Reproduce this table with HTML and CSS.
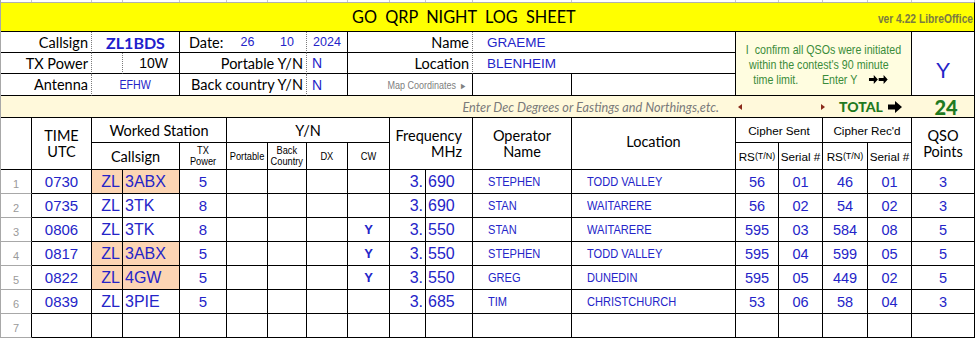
FILE: index.html
```html
<!DOCTYPE html>
<html>
<head>
<meta charset="utf-8">
<title>GO QRP Night Log Sheet</title>
<link rel="stylesheet" href="styles.css">
</head>
<body>
<div class="sheet">
  <div class="stub"></div><div class="stub"></div><div class="stub"></div><div class="stub"></div><div class="stub"></div><div class="stub"></div>
  <div class="stub"></div><div class="stub"></div><div class="stub"></div><div class="stub"></div><div class="stub"></div><div class="stub"></div>
  <div class="stub"></div><div class="stub"></div><div class="stub"></div><div class="stub"></div><div class="stub"></div><div class="stub"></div>

  <div class="c s18 title br bb"><span class="title-text">GO  QRP  NIGHT  LOG  SHEET</span><span class="ver"><span class="n nr">ver 4.22 LibreOffice</span></span></div>

  <div class="c s2 lab bd bb">Callsign</div>
  <div class="c s2 br bb mid call">ZL1BDS</div>
  <div class="c bb date">Date:</div>
  <div class="c bb mid dnum">26</div>
  <div class="c bb bd mid dnum">10</div>
  <div class="c bb br mid dnum">2024</div>
  <div class="c s3 lab bd bb">Name</div>
  <div class="c s2 br bb val">GRAEME</div>
  <div class="c s4 r3 br bb box">
    <div class="box-text">
      <div class="l1">I&nbsp; confirm all QSOs were initiated</div>
      <div class="l2">within the contest's 90 minute</div>
      <div class="l3">time limit.&nbsp;&nbsp;&nbsp;&nbsp;&nbsp;&nbsp;&nbsp; Enter Y&nbsp;&nbsp;&nbsp; <svg class="arr2" width="24" height="9" viewBox="0 0 24 9"><path d="M0 3h6V0l5 4.5L6 9V6H0z"/><path d="M12 3h6V0l5 4.5L18 9V6h-6z"/></svg></div>
    </div>
  </div>
  <div class="c r3 br bb yes">Y</div>

  <div class="c s2 lab bd bb">TX Power</div>
  <div class="c bd bb"></div>
  <div class="c br bb pw">10W</div>
  <div class="c s3 lab bd bb">Portable Y/N</div>
  <div class="c br bb yn">N</div>
  <div class="c s3 lab bd bb">Location</div>
  <div class="c s2 br bb val">BLENHEIM</div>

  <div class="c s2 lab bd bb">Antenna</div>
  <div class="c s2 br bb mid efhw"><span class="n">EFHW</span></div>
  <div class="c s3 lab bd bb">Back country Y/N</div>
  <div class="c br bb yn">N</div>
  <div class="c s3 br bb map"><span class="n nr">Map Coordinates <span class="tri">&#9658;</span></span></div>
  <div class="c br bb"></div>
  <div class="c br bb"></div>

  <div class="c s13 band bb hint">Enter Dec Degrees or Eastings and Northings,etc.</div>
  <div class="c s4 band bb tot">
    <svg class="tl" width="4" height="6" viewBox="0 0 4 6"><path d="M4 0v6L0 3z"/></svg>
    <svg class="tr" width="4" height="6" viewBox="0 0 4 6"><path d="M0 0v6l4-3z"/></svg>
    <span class="total">TOTAL</span>
    <svg class="tarr" width="14" height="12" viewBox="0 0 14 12"><path d="M0 3.5h7V0l7 6-7 6V8.5H0z"/></svg>
  </div>
  <div class="c band bb br mid score">24</div>

  <div class="c r2 br bb"></div>
  <div class="c r2 br bb mid hd"><div class="stack">TIME<br>UTC</div></div>
  <div class="c s3 br bb mid hd">Worked Station</div>
  <div class="c s4 br bb mid hd">Y/N</div>
  <div class="c s2 r2 br bb hd freq"><div class="stack rt">Frequency<br>MHz</div></div>
  <div class="c r2 br bb mid hd"><div class="stack">Operator<br>Name</div></div>
  <div class="c r2 br bb mid hd loc">Location</div>
  <div class="c s2 br bb mid sm">Cipher Sent</div>
  <div class="c s2 br bb mid sm">Cipher Rec'd</div>
  <div class="c r2 br bb mid hd"><div class="stack">QSO<br>Points</div></div>

  <div class="c s2 br bb mid hd cs">Callsign</div>
  <div class="c br bb mid xs"><div class="n stack lh">TX<br>Power</div></div>
  <div class="c br bb mid xs"><span class="n">Portable</span></div>
  <div class="c br bb mid xs"><div class="n stack lh">Back<br>Country</div></div>
  <div class="c br bb mid xs"><span class="n">DX</span></div>
  <div class="c br bb mid xs"><span class="n">CW</span></div>
  <div class="c br bb mid sm">RS<small>(T/N)</small></div>
  <div class="c br bb mid sm">Serial #</div>
  <div class="c br bb mid sm">RS<small>(T/N)</small></div>
  <div class="c br bb mid sm">Serial #</div>

  <!-- row 1 -->
  <div class="c rn">1</div>
  <div class="c br bb mid tm">0730</div>
  <div class="c br bb zl hl">ZL</div>
  <div class="c br bb sfx hl">3ABX</div>
  <div class="c br bb mid tx">5</div>
  <div class="c br bb"></div><div class="c br bb"></div><div class="c br bb"></div><div class="c br bb"></div>
  <div class="c br bb fa">3.</div>
  <div class="c br bb fb">690</div>
  <div class="c br bb op"><span class="n nl">STEPHEN</span></div>
  <div class="c br bb lc"><span class="n nl">TODD VALLEY</span></div>
  <div class="c br bb mid cn">56</div>
  <div class="c br bb mid cn">01</div>
  <div class="c br bb mid cn">46</div>
  <div class="c br bb mid cn">01</div>
  <div class="c br bb mid cn">3</div>

  <!-- row 2 -->
  <div class="c rn">2</div>
  <div class="c br bb mid tm">0735</div>
  <div class="c br bb zl">ZL</div>
  <div class="c br bb sfx">3TK</div>
  <div class="c br bb mid tx">8</div>
  <div class="c br bb"></div><div class="c br bb"></div><div class="c br bb"></div><div class="c br bb"></div>
  <div class="c br bb fa">3.</div>
  <div class="c br bb fb">690</div>
  <div class="c br bb op"><span class="n nl">STAN</span></div>
  <div class="c br bb lc"><span class="n nl">WAITARERE</span></div>
  <div class="c br bb mid cn">56</div>
  <div class="c br bb mid cn">02</div>
  <div class="c br bb mid cn">54</div>
  <div class="c br bb mid cn">02</div>
  <div class="c br bb mid cn">3</div>

  <!-- row 3 -->
  <div class="c rn">3</div>
  <div class="c br bb mid tm">0806</div>
  <div class="c br bb zl">ZL</div>
  <div class="c br bb sfx">3TK</div>
  <div class="c br bb mid tx">8</div>
  <div class="c br bb"></div><div class="c br bb"></div><div class="c br bb"></div>
  <div class="c br bb mid yy">Y</div>
  <div class="c br bb fa">3.</div>
  <div class="c br bb fb">550</div>
  <div class="c br bb op"><span class="n nl">STAN</span></div>
  <div class="c br bb lc"><span class="n nl">WAITARERE</span></div>
  <div class="c br bb mid cn">595</div>
  <div class="c br bb mid cn">03</div>
  <div class="c br bb mid cn">584</div>
  <div class="c br bb mid cn">08</div>
  <div class="c br bb mid cn">5</div>

  <!-- row 4 -->
  <div class="c rn">4</div>
  <div class="c br bb mid tm">0817</div>
  <div class="c br bb zl hl">ZL</div>
  <div class="c br bb sfx hl">3ABX</div>
  <div class="c br bb mid tx">5</div>
  <div class="c br bb"></div><div class="c br bb"></div><div class="c br bb"></div>
  <div class="c br bb mid yy">Y</div>
  <div class="c br bb fa">3.</div>
  <div class="c br bb fb">550</div>
  <div class="c br bb op"><span class="n nl">STEPHEN</span></div>
  <div class="c br bb lc"><span class="n nl">TODD VALLEY</span></div>
  <div class="c br bb mid cn">595</div>
  <div class="c br bb mid cn">04</div>
  <div class="c br bb mid cn">599</div>
  <div class="c br bb mid cn">05</div>
  <div class="c br bb mid cn">5</div>

  <!-- row 5 -->
  <div class="c rn">5</div>
  <div class="c br bb mid tm">0822</div>
  <div class="c br bb zl hl">ZL</div>
  <div class="c br bb sfx hl">4GW</div>
  <div class="c br bb mid tx">5</div>
  <div class="c br bb"></div><div class="c br bb"></div><div class="c br bb"></div>
  <div class="c br bb mid yy">Y</div>
  <div class="c br bb fa">3.</div>
  <div class="c br bb fb">550</div>
  <div class="c br bb op"><span class="n nl">GREG</span></div>
  <div class="c br bb lc"><span class="n nl">DUNEDIN</span></div>
  <div class="c br bb mid cn">595</div>
  <div class="c br bb mid cn">05</div>
  <div class="c br bb mid cn">449</div>
  <div class="c br bb mid cn">02</div>
  <div class="c br bb mid cn">5</div>

  <!-- row 6 -->
  <div class="c rn">6</div>
  <div class="c br bb mid tm">0839</div>
  <div class="c br bb zl">ZL</div>
  <div class="c br bb sfx">3PIE</div>
  <div class="c br bb mid tx">5</div>
  <div class="c br bb"></div><div class="c br bb"></div><div class="c br bb"></div><div class="c br bb"></div>
  <div class="c br bb fa">3.</div>
  <div class="c br bb fb">685</div>
  <div class="c br bb op"><span class="n nl">TIM</span></div>
  <div class="c br bb lc"><span class="n nl">CHRISTCHURCH</span></div>
  <div class="c br bb mid cn">53</div>
  <div class="c br bb mid cn">06</div>
  <div class="c br bb mid cn">58</div>
  <div class="c br bb mid cn">04</div>
  <div class="c br bb mid cn">3</div>

  <!-- row 7 -->
  <div class="c rn">7</div>
  <div class="c br bb"></div><div class="c br bb"></div><div class="c br bb"></div><div class="c br bb"></div>
  <div class="c br bb"></div><div class="c br bb"></div><div class="c br bb"></div><div class="c br bb"></div>
  <div class="c br bb"></div><div class="c br bb"></div><div class="c br bb"></div><div class="c br bb"></div>
  <div class="c br bb"></div><div class="c br bb"></div><div class="c br bb"></div><div class="c br bb"></div>
  <div class="c br bb"></div>
</div>
</body>
</html>
```

FILE: styles.css
```css
* { box-sizing: border-box; }
html, body { margin: 0; padding: 0; background: #fff; }
body {
  width: 978px;
  height: 339px;
  overflow: hidden;
  font-family: Lato, "Liberation Sans", sans-serif;
  color: #000;
}

.sheet {
  display: grid;
  width: 975px;
  border-left: 1px solid #a8a8a8;
  grid-template-columns: 31px 60px 31px 57px 47px 41px 39px 41px 42px 36px 47px 99px 164px 43px 44px 45px 44px 63px;
  grid-template-rows: 2px 30px 21px 21px 22px 22px 25px 27px repeat(7, 24px);
}

.c { display: flex; align-items: center; min-width: 0; overflow: hidden; white-space: nowrap; }
.s2 { grid-column: span 2; }
.s3 { grid-column: span 3; }
.s4 { grid-column: span 4; }
.s13 { grid-column: span 13; }
.s18 { grid-column: span 18; }
.r2 { grid-row: span 2; }
.r3 { grid-row: span 3; }

.br { border-right: 1px solid #000; }
.bb { border-bottom: 1px solid #000; }
.bd { border-right: 1px dotted #7a7a7a; }
.mid { justify-content: center; text-align: center; }

/* condensed (Arial Narrow look) */
.n { display: inline-block; transform: scaleX(0.82); transform-origin: center center; }
.nl { transform-origin: left center; }
.nr { transform-origin: right center; }

.stub { border-right: 1px solid #c8c8c8; }

/* title bar */
.title {
  background: #ffff00;
  align-items: flex-end;
  padding-bottom: 4px;
  border-top: 1px solid #b0b0b0;
}
.title-text {
  white-space: pre;
  margin-left: 351px;
  font-size: 16.3px;
  line-height: 20px;
}
.ver {
  margin-left: auto;
  padding-right: 1px;
  font-family: "Liberation Sans", sans-serif;
  font-weight: bold;
  font-size: 12.5px;
  color: #7b7b40;
  line-height: 16px;
}

/* info block */
.lab { justify-content: flex-end; padding-right: 3px; font-size: 14.5px; }
.call { color: #2020cc; font-weight: bold; font-size: 16px; }
.date { padding-left: 9px; font-size: 14.5px; }
.dnum { color: #2424c8; font-family: "Liberation Sans", sans-serif; font-size: 12.5px; }
.val { padding-left: 14px; color: #2424c8; font-family: "Liberation Sans", sans-serif; font-size: 13.5px; }
.pw { justify-content: flex-end; padding-right: 11px; font-family: "Liberation Sans", sans-serif; font-size: 14px; }
.yn { padding-left: 5px; color: #2424c8; font-family: "Liberation Sans", sans-serif; font-size: 14px; }
.efhw { color: #2424c8; font-family: "Liberation Sans", sans-serif; font-size: 13px; }
.map {
  justify-content: flex-end;
  padding-right: 5px;
  color: #808080;
  font-family: "Liberation Sans", sans-serif;
  font-size: 11px;
}
.tri { font-size: 9px; margin-left: 1px; }

.box {
  background: #fffde0;
  color: #3a8c3a;
  font-family: "Liberation Sans", sans-serif;
  font-size: 13px;
  align-items: center;
}
.box-text {
  line-height: 15px;
  padding-top: 1px;
  transform: scaleX(0.82);
  transform-origin: left center;
}
.l1 { padding-left: 12px; }
.l2 { padding-left: 16px; }
.l3 { padding-left: 21px; }
.arr2 { fill: #000; vertical-align: middle; margin-top: -2px; }
.yes {
  justify-content: center;
  align-items: flex-end;
  padding-bottom: 11px;
  color: #2424c8;
  font-family: "Liberation Sans", sans-serif;
  font-size: 22px;
}

/* band */
.band { background: #fff9db; }
.hint {
  justify-content: flex-end;
  padding-right: 17px;
  color: #7a7a7a;
  font-style: italic;
  font-size: 12.7px;
}
.tl { fill: #8a2a1a; margin-left: 2px; }
.tr { fill: #8a2a1a; margin-left: 79px; }
.total { margin-left: 14px; color: #1f7a1f; font-weight: 900; font-size: 14px; }
.tarr { fill: #000; margin-left: 5px; }
.score {
  overflow: visible;
  color: #1f7a1f;
  font-weight: 900;
  font-size: 20px;
  line-height: 20px;
  padding-left: 6px;
}

/* table header */
.hd { font-size: 14.5px; }
.stack { line-height: 16px; text-align: center; }
.stack.rt { text-align: right; }
.freq { justify-content: flex-end; padding-right: 10px; }
.loc { padding-bottom: 4px; }
.sm { font-family: "Liberation Sans", sans-serif; font-size: 11.7px; }
.sm small { font-size: 9px; }
.xs { font-family: "Liberation Sans", sans-serif; font-size: 11.3px; }
.lh { line-height: 11px; }

/* data rows */
.rn {
  border-right: 1px solid #000;
  border-bottom: 1px solid #a8a8a8;
  padding-left: 12px;
  padding-top: 5px;
  color: #9a9a9a;
  font-family: "Liberation Sans", sans-serif;
  font-size: 11px;
}
.tm, .zl, .sfx, .tx, .fa, .fb, .cn, .yy {
  color: #2424c8;
  font-family: "Liberation Sans", sans-serif;
}
.tm { font-size: 15px; }
.zl { justify-content: flex-end; padding-right: 2px; font-size: 16px; }
.sfx { padding-left: 2px; font-size: 16px; }
.tx { font-size: 15px; }
.yy { font-size: 13px; font-weight: bold; }
.fa { justify-content: flex-end; padding-right: 2px; font-size: 16px; }
.fb { padding-left: 2px; font-size: 16px; }
.op, .lc {
  color: #2424c8;
  font-family: "Liberation Sans", sans-serif;
  font-size: 13.5px;
}
.op { padding-left: 15px; }
.lc { padding-left: 15px; }
.cn { font-size: 14.5px; }
.hl { background: #fcd5b4; }
```
